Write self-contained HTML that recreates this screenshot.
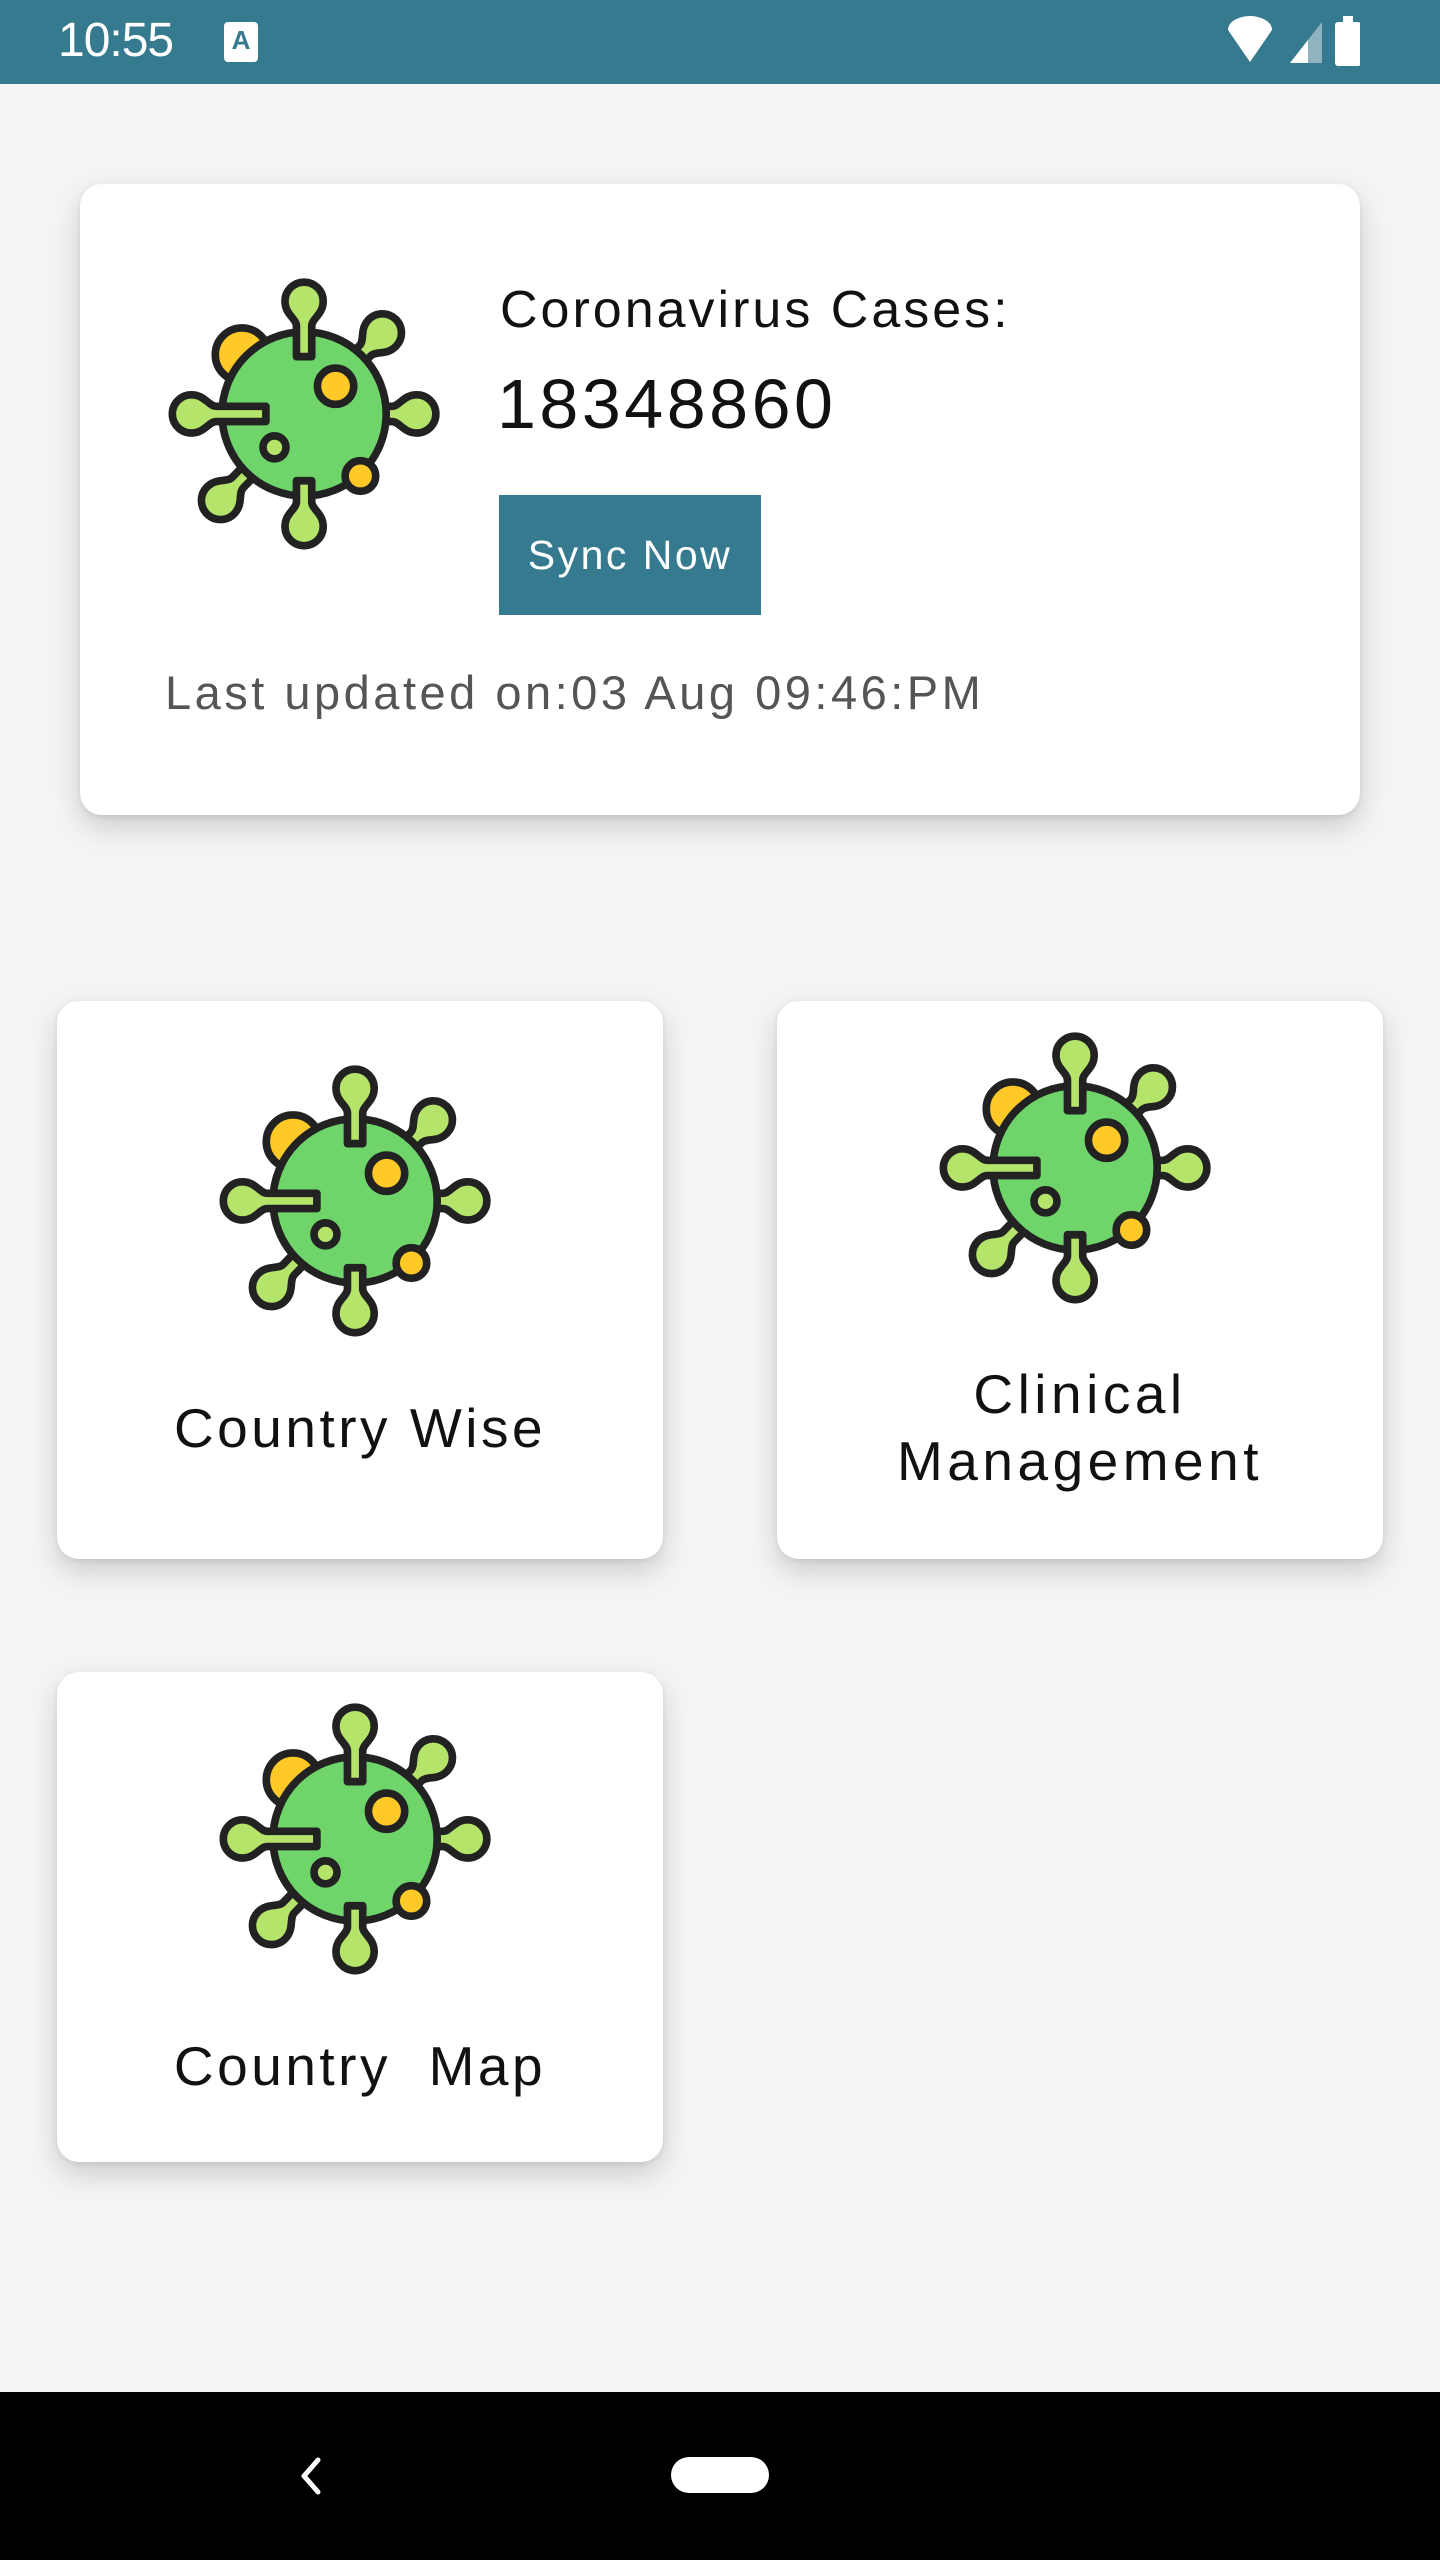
<!DOCTYPE html>
<html><head><meta charset="utf-8"><style>
*{margin:0;padding:0;box-sizing:border-box}
body{width:1440px;height:2560px;background:#f4f4f4;font-family:"Liberation Sans",sans-serif;position:relative;overflow:hidden}
.status{position:absolute;left:0;top:0;width:1440px;height:84px;background:#367a8f;color:#fff}
.card{position:absolute;background:#fff;border-radius:22px;box-shadow:0 12px 28px rgba(0,0,0,0.16),0 2px 6px rgba(0,0,0,0.08)}
.abs{position:absolute}
.lbl{position:absolute;left:0;width:100%;text-align:center;font-size:55px;color:#111;letter-spacing:3.5px}
.nav{position:absolute;left:0;top:2392px;width:1440px;height:168px;background:#000}
</style></head><body>
<svg width="0" height="0" style="position:absolute">
<symbol id="v" viewBox="0 0 310 310">
<g stroke="#222" stroke-width="8" stroke-linejoin="round" stroke-linecap="round">
<circle cx="88" cy="95" r="28" fill="#ffc928"/>
<g fill="#b5e46a">
<path d="M-8 -60 L-8 -92 C-8 -100 -20 -104 -20 -118 A20 20 0 0 1 20 -118 C20 -104 8 -100 8 -92 L8 -60 Z" transform="translate(153 157) rotate(44)"/>
<path d="M-8 -60 L-8 -92 C-8 -100 -20 -104 -20 -118 A20 20 0 0 1 20 -118 C20 -104 8 -100 8 -92 L8 -60 Z" transform="translate(153 157) rotate(90)"/>
<path d="M-8 -60 L-8 -100 C-8 -108 -20 -112 -20 -126 A20 20 0 0 1 20 -126 C20 -112 8 -108 8 -100 L8 -60 Z" transform="translate(153 157) rotate(224)"/>
</g>
<circle cx="153" cy="157" r="86" fill="#6fd56a"/>
<path d="M200 86 A86 86 0 0 1 190 234 A86 86 0 0 0 200 86 Z" fill="#5bc258" stroke="none"/>
<path d="M-8 -40 L-8 -92 C-8 -100 -20 -104 -20 -118 A20 20 0 0 1 20 -118 C20 -104 8 -100 8 -92 L8 -40 Z" transform="translate(153 157) rotate(270)" fill="#b5e46a"/>
<path d="M-8 -60 L-8 -92 C-8 -100 -20 -104 -20 -118 A20 20 0 0 1 20 -118 C20 -104 8 -100 8 -92 L8 -60 Z" transform="translate(153 157)" fill="#b5e46a"/>
<path d="M-8 -70 L-8 -92 C-8 -100 -20 -104 -20 -118 A20 20 0 0 1 20 -118 C20 -104 8 -100 8 -92 L8 -70 Z" transform="translate(153 157) rotate(180)" fill="#b5e46a"/>
<circle cx="186" cy="128" r="19" fill="#ffc928"/>
<circle cx="122" cy="192" r="12" fill="#b5e46a"/>
<circle cx="212" cy="222" r="16" fill="#ffc928"/>
</g>
</symbol>
</svg>

<div class="status">
<div class="abs" style="left:58px;top:13px;font-size:48px;letter-spacing:-1px">10:55</div>
<div class="abs" style="left:224px;top:22px;width:34px;height:40px;background:#fff;border-radius:4px;color:#367a8f;font-size:26px;font-weight:bold;text-align:center;line-height:36px">A</div>
<svg class="abs" style="left:1220px;top:16px" width="140" height="52" viewBox="0 0 140 52">
<path d="M8 14 C8 4 22 0 30 0 C38 0 52 4 52 14 L30 46 Z" fill="#fff"/>
<path d="M70 47 L102 6 L102 47 Z" fill="#8fb3bf"/>
<path d="M70 47 L88 24 L88 47 Z" fill="#fff"/>
<rect x="115" y="6" width="26" height="44" rx="3" fill="#fff"/>
<rect x="123" y="0" width="10" height="8" fill="#fff"/>
</svg>
</div>

<div class="card" style="left:80px;top:184px;width:1280px;height:631px">
<svg class="abs" style="left:78px;top:80px" width="296" height="296"><use href="#v"/></svg>
<div class="abs" style="left:420px;top:96px;font-size:52px;color:#111;letter-spacing:3px">Coronavirus Cases:</div>
<div class="abs" style="left:417px;top:180px;font-size:70px;color:#111;letter-spacing:3.5px">18348860</div>
<div class="abs" style="left:419px;top:311px;width:262px;height:120px;background:#367a8f;color:#fff;font-size:41px;text-align:center;line-height:120px;letter-spacing:2.5px">Sync Now</div>
<div class="abs" style="left:85px;top:481px;font-size:47px;color:#555;letter-spacing:3.5px">Last updated on:03 Aug 09:46:PM</div>
</div>

<div class="card" style="left:57px;top:1001px;width:606px;height:558px">
<svg class="abs" style="left:152px;top:50px" width="296" height="296"><use href="#v"/></svg>
<div class="lbl" style="top:395px">Country Wise</div>
</div>
<div class="card" style="left:777px;top:1001px;width:606px;height:558px">
<svg class="abs" style="left:152px;top:17px" width="296" height="296"><use href="#v"/></svg>
<div class="lbl" style="top:360px;line-height:67px;letter-spacing:4.5px">Clinical<br>Management</div>
</div>
<div class="card" style="left:57px;top:1672px;width:606px;height:490px">
<svg class="abs" style="left:152px;top:17px" width="296" height="296"><use href="#v"/></svg>
<div class="lbl" style="top:362px">Country&nbsp; Map</div>
</div>

<div class="nav">
<svg class="abs" style="left:296px;top:64px" width="30" height="40" viewBox="0 0 30 40"><path d="M22 4 L8 20 L22 36" stroke="#fff" stroke-width="5" fill="none" stroke-linecap="round" stroke-linejoin="round"/></svg>
<div class="abs" style="left:671px;top:65px;width:98px;height:36px;background:#fff;border-radius:18px"></div>
</div>
</body></html>
